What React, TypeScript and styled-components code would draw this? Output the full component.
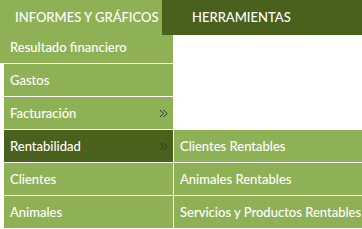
import React from "react";
import styled, { createGlobalStyle } from "styled-components";

const Global = createGlobalStyle`
  html, body { margin: 0; padding: 0; background: #ffffff; }
  body { font-family: Lato, "Open Sans", sans-serif; }
`;

const LIGHT = "#8fb155";
const DARK = "#4a601d";

const Page = styled.div`
  position: relative;
  width: 362px;
  height: 229px;
  overflow: hidden;
`;

const NavBar = styled.nav`
  display: flex;
  height: 35px;
  background: ${DARK};
`;

const NavTab = styled.div<{ $active?: boolean }>`
  display: flex;
  align-items: center;
  box-sizing: border-box;
  height: 100%;
  padding-left: ${(p) => (p.$active ? "15px" : "30px")};
  padding-bottom: 2px;
  width: ${(p) => (p.$active ? "162px" : "auto")};
  background: ${(p) => (p.$active ? LIGHT : DARK)};
  color: #ffffff;
  font-size: 13px;
  font-weight: 500;
  text-transform: uppercase;
  white-space: nowrap;
`;

const Dropdown = styled.ul`
  position: absolute;
  top: 35px;
  left: 0;
  width: 173px;
  margin: 0;
  padding: 0;
  list-style: none;
  z-index: 2;
`;

const Item = styled.li<{ $active?: boolean; $first?: boolean }>`
  position: relative;
  display: flex;
  align-items: center;
  justify-content: space-between;
  box-sizing: border-box;
  height: ${(p) => (p.$first ? "29px" : "33px")};
  margin-left: ${(p) => (p.$first ? "0" : "4px")};
  padding: ${(p) => (p.$first ? "0 5px 4px 10px" : "0 5px 0 6px")};
  border-bottom: 1px solid #ffffff;
  background: ${(p) => (p.$active ? DARK : LIGHT)};
  color: #ffffff;
  font-size: 13px;
  font-weight: 500;
  white-space: nowrap;
`;

const SubMenu = styled.ul`
  position: absolute;
  top: 0;
  left: calc(100% + 1px);
  width: 188px;
  margin: 0;
  padding: 0;
  list-style: none;
`;

const SubItem = styled.li`
  display: flex;
  align-items: center;
  box-sizing: border-box;
  height: 33px;
  padding: 0 0 0 6px;
  border-bottom: 1px solid #ffffff;
  background: ${LIGHT};
  color: #ffffff;
  font-size: 13px;
  font-weight: 500;
  white-space: nowrap;
`;

const Chevron = () => (
  <svg width="9" height="9" viewBox="0 0 9 9">
    <polyline points="1,1 4.5,4.5 1,8" fill="none" stroke="#2f3a1c" strokeWidth="1" />
    <polyline points="4.5,1 8,4.5 4.5,8" fill="none" stroke="#2f3a1c" strokeWidth="1" />
  </svg>
);

export default function App() {
  return (
    <Page>
      <Global />
      <NavBar>
        <NavTab $active>Informes y gráficos</NavTab>
        <NavTab>Herramientas</NavTab>
      </NavBar>
      <Dropdown>
        <Item $first>Resultado financiero</Item>
        <Item>Gastos</Item>
        <Item>
          Facturación
          <Chevron />
        </Item>
        <Item $active>
          Rentabilidad
          <Chevron />
          <SubMenu>
            <SubItem>Clientes Rentables</SubItem>
            <SubItem>Animales Rentables</SubItem>
            <SubItem>Servicios y Productos Rentables</SubItem>
          </SubMenu>
        </Item>
        <Item>Clientes</Item>
        <Item>Animales</Item>
      </Dropdown>
    </Page>
  );
}
